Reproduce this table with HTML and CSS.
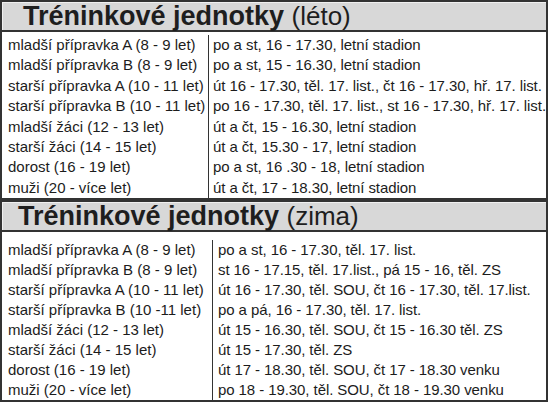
FILE: index.html
```html
<!DOCTYPE html>
<html lang="cs">
<head>
<meta charset="utf-8">
<title>Tréninkové jednotky</title>
<link rel="stylesheet" href="styles.css">
</head>
<body>
<div class="page">
  <section class="sec sec-leto">
    <div class="head"><b>Tréninkové jednotky</b> <span>(léto)</span></div>
    <div class="body">
      <div class="col left">
        <div class="r">mladší přípravka A (8 - 9 let)</div>
        <div class="r">mladší přípravka B (8 - 9 let)</div>
        <div class="r">starší přípravka A (10 - 11 let)</div>
        <div class="r">starší přípravka B (10 - 11 let)</div>
        <div class="r">mladší žáci (12 - 13 let)</div>
        <div class="r">starší žáci (14 - 15 let)</div>
        <div class="r">dorost (16 - 19 let)</div>
        <div class="r">muži (20 - více let)</div>
      </div>
      <div class="col right">
        <div class="r">po a st, 16 - 17.30, letní stadion</div>
        <div class="r">po a st, 15 - 16.30, letní stadion</div>
        <div class="r">út 16 - 17.30, těl. 17. list., čt 16 - 17.30, hř. 17. list.</div>
        <div class="r">po 16 - 17.30, těl. 17. list., st 16 - 17.30, hř. 17. list.</div>
        <div class="r">út a čt, 15 - 16.30, letní stadion</div>
        <div class="r">út a čt, 15.30 - 17, letní stadion</div>
        <div class="r">po a st, 16 .30 - 18, letní stadion</div>
        <div class="r">út a čt, 17 - 18.30, letní stadion</div>
      </div>
    </div>
  </section>
  <section class="sec sec-zima">
    <div class="head"><b>Tréninkové jednotky</b> <span>(zima)</span></div>
    <div class="body">
      <div class="col left">
        <div class="r">mladší přípravka A (8 - 9 let)</div>
        <div class="r">mladší přípravka B (8 - 9 let)</div>
        <div class="r">starší přípravka A (10 - 11 let)</div>
        <div class="r">starší přípravka B (10 -11 let)</div>
        <div class="r">mladší žáci (12 - 13 let)</div>
        <div class="r">starší žáci (14 - 15 let)</div>
        <div class="r">dorost (16 - 19 let)</div>
        <div class="r">muži (20 - více let)</div>
      </div>
      <div class="col right">
        <div class="r">po a st, 16 - 17.30, těl. 17. list.</div>
        <div class="r">st 16 - 17.15, těl. 17.list., pá 15 - 16, těl. ZS</div>
        <div class="r">út 16 - 17.30, těl. SOU, čt 16 - 17.30, těl. 17.list.</div>
        <div class="r">po a pá, 16 - 17.30, těl. 17. list.</div>
        <div class="r">út 15 - 16.30, těl. SOU, čt 15 - 16.30 těl. ZS</div>
        <div class="r">út 15 - 17.30, těl. ZS</div>
        <div class="r">út 17 - 18.30, těl. SOU, čt 17 - 18.30 venku</div>
        <div class="r">po 18 - 19.30, těl. SOU, čt 18 - 19.30 venku</div>
      </div>
    </div>
  </section>
</div>
</body>
</html>
```
FILE: styles.css
```css
html, body {
  margin: 0;
  padding: 0;
  background: #ffffff;
}
body {
  font-family: "Liberation Sans", Arial, sans-serif;
  color: #1c1c1c;
}
.page {
  width: 548px;
  display: flex;
  flex-direction: column;
}
.sec {
  border: 2px solid #333333;
  box-sizing: border-box;
}
.head {
  background: #d8d8d8;
  border-bottom: 2px solid #333333;
  height: 28px;
  line-height: 28px;
  padding-left: 21px;
  white-space: nowrap;
  box-shadow: inset 1px 1px 0 #f0f0f0;
  color: #1e1e1e;
}
.head b {
  font-weight: bold;
  font-size: 27px;
}
.head span {
  font-weight: normal;
  font-size: 26px;
  margin-left: 3px;
}
.body {
  display: flex;
}
.col {
  display: flex;
  flex-direction: column;
}
.left {
  flex-shrink: 0;
  border-right: 1px solid #333333;
}
.right {
  min-width: 0;
  letter-spacing: -0.08px;
}
.r {
  font-size: 15px;
  white-space: nowrap;
}
.sec-leto .body { padding-top: 3px; }
.sec-leto .r { height: 20.4px; line-height: 20.4px; }
.sec-leto .left { width: 200px; padding-left: 6px; }
.sec-leto .right { padding-left: 4px; }

.sec-zima .head { padding-left: 16px; }
.sec-zima .body { padding-top: 8px; }
.sec-zima .r { height: 20px; line-height: 20px; }
.sec-zima .left { width: 204px; padding-left: 6px; }
.sec-zima .right { padding-left: 5px; }
```
